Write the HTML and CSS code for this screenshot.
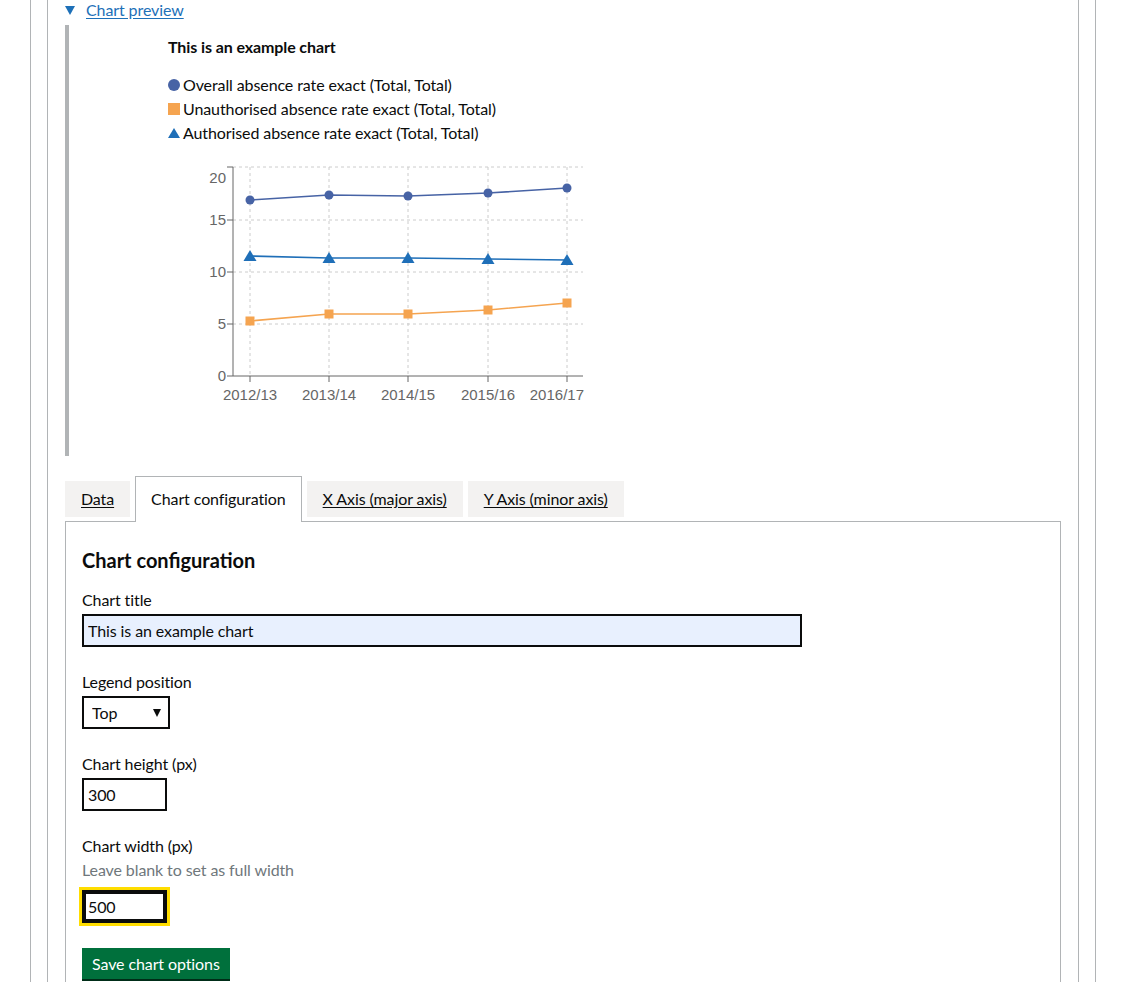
FILE: index.html
```html
<!DOCTYPE html>
<html lang="en">
<head>
<meta charset="utf-8">
<title>Chart configuration</title>
<link rel="stylesheet" href="styles.css">
</head>
<body>
<div class="frame-outer">
  <div class="frame-inner">
    <details class="preview" open>
      <summary class="preview-summary"><span class="summary-arrow"></span><span class="summary-text">Chart preview</span></summary>
      <div class="preview-body">
        <h3 class="chart-title">This is an example chart</h3>
        <ul class="legend">
          <li class="legend-item"><svg class="legend-icon" width="12" height="12" viewBox="0 0 12 12"><circle cx="6" cy="6" r="6" fill="#4763a5"/></svg>Overall absence rate exact (Total, Total)</li>
          <li class="legend-item"><svg class="legend-icon" width="12" height="12" viewBox="0 0 12 12"><rect x="0" y="0" width="12" height="12" fill="#f5a450"/></svg>Unauthorised absence rate exact (Total, Total)</li>
          <li class="legend-item"><svg class="legend-icon" width="12" height="12" viewBox="0 0 12 12"><polygon points="0,11 12,11 6,1" fill="#1f6fb8"/></svg>Authorised absence rate exact (Total, Total)</li>
        </ul>
        <svg class="chart" width="400" height="250" viewBox="190 160 400 250">
          <g class="grid">
            <line x1="233" y1="167" x2="583" y2="167"/>
            <line x1="233" y1="220" x2="583" y2="220"/>
            <line x1="233" y1="272" x2="583" y2="272"/>
            <line x1="233" y1="324" x2="583" y2="324"/>
            <line x1="250" y1="167" x2="250" y2="376"/>
            <line x1="329" y1="167" x2="329" y2="376"/>
            <line x1="408" y1="167" x2="408" y2="376"/>
            <line x1="488" y1="167" x2="488" y2="376"/>
            <line x1="567" y1="167" x2="567" y2="376"/>
          </g>
          <g class="axis">
            <line x1="233" y1="167" x2="233" y2="376"/>
            <line x1="233" y1="376" x2="583" y2="376"/>
            <line x1="227" y1="167" x2="233" y2="167"/>
            <line x1="227" y1="220" x2="233" y2="220"/>
            <line x1="227" y1="272" x2="233" y2="272"/>
            <line x1="227" y1="324" x2="233" y2="324"/>
            <line x1="227" y1="376" x2="233" y2="376"/>
            <line x1="250" y1="376" x2="250" y2="382"/>
            <line x1="329" y1="376" x2="329" y2="382"/>
            <line x1="408" y1="376" x2="408" y2="382"/>
            <line x1="488" y1="376" x2="488" y2="382"/>
            <line x1="567" y1="376" x2="567" y2="382"/>
          </g>
          <g class="tick-labels">
            <text x="226" y="183" text-anchor="end">20</text>
            <text x="226" y="225" text-anchor="end">15</text>
            <text x="226" y="277" text-anchor="end">10</text>
            <text x="226" y="329" text-anchor="end">5</text>
            <text x="226" y="381" text-anchor="end">0</text>
            <text x="250" y="400" text-anchor="middle">2012/13</text>
            <text x="329" y="400" text-anchor="middle">2013/14</text>
            <text x="408" y="400" text-anchor="middle">2014/15</text>
            <text x="488" y="400" text-anchor="middle">2015/16</text>
            <text x="584" y="400" text-anchor="end">2016/17</text>
          </g>
          <polyline class="series" stroke="#4763a5" points="250,200 329,195 408,196 488,193 567,188"/>
          <polyline class="series" stroke="#1f6fb8" points="250,256 329,258 408,258 488,259 567,260"/>
          <polyline class="series" stroke="#f5a450" points="250,321 329,314 408,314 488,310 567,303"/>
          <g fill="#4763a5">
            <circle cx="250" cy="200" r="4.5"/>
            <circle cx="329" cy="195" r="4.5"/>
            <circle cx="408" cy="196" r="4.5"/>
            <circle cx="488" cy="193" r="4.5"/>
            <circle cx="567" cy="188" r="4.5"/>
          </g>
          <g fill="#1f6fb8">
            <polygon points="243.5,261 256.5,261 250,250"/>
            <polygon points="322.5,263 335.5,263 329,252"/>
            <polygon points="401.5,263 414.5,263 408,252"/>
            <polygon points="481.5,264 494.5,264 488,253"/>
            <polygon points="560.5,265 573.5,265 567,254"/>
          </g>
          <g fill="#f5a450">
            <rect x="245.5" y="316.5" width="9" height="9"/>
            <rect x="324.5" y="309.5" width="9" height="9"/>
            <rect x="403.5" y="309.5" width="9" height="9"/>
            <rect x="483.5" y="305.5" width="9" height="9"/>
            <rect x="562.5" y="298.5" width="9" height="9"/>
          </g>
        </svg>
      </div>
    </details>

    <div class="tabs">
      <ul class="tabs-list">
        <li class="tab"><a class="tab-link" href="#data">Data</a></li>
        <li class="tab tab-selected"><a class="tab-link" href="#config">Chart configuration</a></li>
        <li class="tab"><a class="tab-link" href="#xaxis">X Axis (major axis)</a></li>
        <li class="tab"><a class="tab-link" href="#yaxis">Y Axis (minor axis)</a></li>
      </ul>
      <div class="tab-panel" id="config">
        <h2 class="panel-heading">Chart configuration</h2>
        <div class="form-group">
          <label class="label" for="title">Chart title</label>
          <input class="input input-title" id="title" type="text" value="This is an example chart">
        </div>
        <div class="form-group">
          <label class="label" for="legend">Legend position</label>
          <span class="select-wrap">
            <select class="select" id="legend">
              <option>Top</option>
              <option>Bottom</option>
              <option>None</option>
            </select>
          </span>
        </div>
        <div class="form-group">
          <label class="label" for="height">Chart height (px)</label>
          <input class="input input-small" id="height" type="text" value="300">
        </div>
        <div class="form-group">
          <label class="label" for="width">Chart width (px)</label>
          <div class="hint">Leave blank to set as full width</div>
          <input class="input input-small input-focused" id="width" type="text" value="500">
        </div>
        <button class="button" type="button">Save chart options</button>
      </div>
    </div>
  </div>
</div>
</body>
</html>
```

FILE: styles.css
```css
html, body {
  margin: 0;
  padding: 0;
  background: #ffffff;
}

body {
  font-family: Lato, "Liberation Sans", Arial, sans-serif;
  font-size: 16px;
  line-height: 20px;
  letter-spacing: -0.1px;
  color: #0b0c0c;
  overflow: hidden;
}

.frame-outer {
  margin: 0 31px 0 30px;
  padding: 0 16px;
  border-left: 1px solid #b1b4b6;
  border-right: 1px solid #b1b4b6;
  min-height: 1100px;
}

.frame-inner {
  border-left: 1px solid #b1b4b6;
  border-right: 1px solid #b1b4b6;
  padding: 0 17px;
  min-height: 1100px;
}

/* Details / preview */
.preview {
  margin: 0;
}

.preview-summary {
  display: flex;
  align-items: center;
  list-style: none;
  cursor: pointer;
  height: 20px;
}

.preview-summary::-webkit-details-marker {
  display: none;
}

.summary-arrow {
  width: 0;
  height: 0;
  border-left: 5px solid transparent;
  border-right: 5px solid transparent;
  border-top: 9px solid #1d70b8;
  margin-right: 11px;
}

.summary-text {
  color: #1d70b8;
  text-decoration: underline;
  text-underline-offset: 2px;
}

.preview-body {
  margin-top: 5px;
  border-left: 4px solid #b1b4b6;
  padding: 12px 0 46px 99px;
}

.chart-title {
  margin: 0;
  font-size: 16px;
  line-height: 20px;
  font-weight: 700;
}

.legend {
  list-style: none;
  margin: 16px 0 0 0;
  padding: 0;
}

.legend-item {
  display: flex;
  align-items: center;
  height: 24px;
}

.legend-icon {
  margin-right: 3px;
  flex: none;
}

.chart {
  display: block;
  margin: 15px 0 0 22px;
}

.grid line {
  stroke: #cccccc;
  stroke-width: 1;
  stroke-dasharray: 3 3;
}

.axis line {
  stroke: #666666;
  stroke-width: 1;
}

.tick-labels text {
  font-family: "Liberation Sans", Arial, sans-serif;
  font-size: 15px;
  letter-spacing: 0;
  fill: #666666;
}

.series {
  fill: none;
  stroke-width: 1.6;
}

/* Tabs */
.tabs {
  margin-top: 20px;
}

.tabs-list {
  list-style: none;
  margin: 0 0 -1px 0;
  padding: 0;
  display: flex;
  align-items: flex-end;
  gap: 5px;
}

.tab {
  background: #f3f2f1;
  padding: 8px 16px;
  margin-bottom: 5px;
}

.tab-link {
  color: #0b0c0c;
  text-decoration: underline;
  text-underline-offset: 2px;
}

.tab-selected {
  position: relative;
  z-index: 1;
  background: #ffffff;
  border: 1px solid #b1b4b6;
  border-bottom: 0;
  padding: 12px 15px 13px 15px;
  margin-bottom: 0;
}

.tab-selected .tab-link {
  text-decoration: none;
}

.tab-panel {
  border: 1px solid #b1b4b6;
  padding: 26px 16px 60px 16px;
}

.panel-heading {
  margin: 0 0 17px 0;
  font-size: 20px;
  line-height: 25px;
  font-weight: 700;
  letter-spacing: 0;
}

.form-group {
  margin-bottom: 25px;
}

.label {
  display: block;
  margin-bottom: 4px;
}

.hint {
  color: #6f777b;
  margin-bottom: 10px;
}

.input {
  display: block;
  box-sizing: border-box;
  height: 33px;
  border: 2px solid #0b0c0c;
  padding: 5px 4px;
  font-family: Lato, "Liberation Sans", Arial, sans-serif;
  font-size: 16px;
  letter-spacing: -0.1px;
  color: #0b0c0c;
  background: #ffffff;
  border-radius: 0;
  margin: 0;
}

.input-title {
  width: 720px;
  background: #e8f0fe;
}

.input-small {
  width: 85px;
}

.input-focused {
  outline: 3px solid #ffdd00;
  outline-offset: 0;
  box-shadow: inset 0 0 0 2px #0b0c0c;
}

.select-wrap {
  position: relative;
  display: inline-block;
}

.select-wrap::after {
  content: "";
  position: absolute;
  right: 9px;
  top: 13px;
  width: 0;
  height: 0;
  border-left: 4px solid transparent;
  border-right: 4px solid transparent;
  border-top: 8px solid #0b0c0c;
  pointer-events: none;
}

.select {
  display: block;
  box-sizing: border-box;
  width: 88px;
  height: 33px;
  border: 2px solid #0b0c0c;
  border-radius: 0;
  padding: 0 8px;
  background: #ffffff;
  font-family: Lato, "Liberation Sans", Arial, sans-serif;
  font-size: 16px;
  color: #0b0c0c;
  appearance: none;
  -webkit-appearance: none;
}

.button {
  display: inline-block;
  background: #00703c;
  color: #ffffff;
  border: 0;
  border-radius: 0;
  padding: 6px 10px;
  font-family: Lato, "Liberation Sans", Arial, sans-serif;
  font-size: 16px;
  line-height: 19px;
  letter-spacing: -0.1px;
  box-shadow: 0 2px 0 #002d18;
  cursor: pointer;
}
```
